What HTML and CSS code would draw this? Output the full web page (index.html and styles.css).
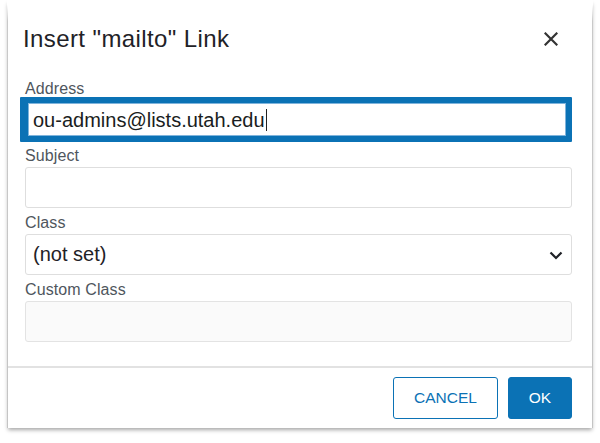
FILE: index.html
```html
<!DOCTYPE html>
<html lang="en">
<head>
<meta charset="utf-8">
<title>Insert mailto Link</title>
<link rel="stylesheet" href="styles.css">
</head>
<body>
<div class="dialog">
  <div class="header">
    <h1 class="title">Insert "mailto" Link</h1>
    <button class="close" aria-label="Close">
      <svg width="14" height="14" viewBox="0 0 14 14"><path d="M1.5 1.5 L12.5 12.5 M12.5 1.5 L1.5 12.5" stroke="#333" stroke-width="2.2" fill="none" stroke-linecap="square"/></svg>
    </button>
  </div>
  <div class="body">
    <div class="field">
      <div class="label">Address</div>
      <div class="input focused">ou-admins@lists.utah.edu<span class="caret"></span></div>
    </div>
    <div class="field field-subject">
      <div class="label">Subject</div>
      <div class="input"></div>
    </div>
    <div class="field">
      <div class="label">Class</div>
      <div class="input select">
        <span>(not set)</span>
        <svg class="chev" width="14" height="9" viewBox="0 0 14 9"><path d="M1.5 1.5 L7 7 L12.5 1.5" stroke="#1f2227" stroke-width="2.2" fill="none"/></svg>
      </div>
    </div>
    <div class="field">
      <div class="label">Custom Class</div>
      <div class="input disabled"></div>
    </div>
  </div>
  <div class="footer">
    <button class="btn btn-cancel">CANCEL</button>
    <button class="btn btn-ok">OK</button>
  </div>
</div>
</body>
</html>
```
FILE: styles.css
```css
* { box-sizing: border-box; }
html, body { margin: 0; padding: 0; background: #fff; }
body {
  font-family: "Liberation Sans", Arial, sans-serif;
  width: 600px;
  height: 443px;
  overflow: hidden;
}
.dialog {
  margin-left: 7px;
  width: 586px;
  background: #fff;
  border-style: solid;
  border-width: 0 1px;
  border-image: linear-gradient(to bottom, rgba(200,200,200,0) 6px, #c9c9c9 22px, #c4c4c4 100%) 1;
  box-shadow: 0 3px 4px -1px rgba(0,0,0,0.35);
}
.header {
  display: flex;
  align-items: center;
  justify-content: space-between;
  padding: 25px 34px 0 15px;
}
.title {
  margin: 0;
  font-size: 24px;
  line-height: 28px;
  font-weight: normal;
  color: #1f2227;
  letter-spacing: 0.4px;
}
.close {
  border: 0;
  background: none;
  padding: 0;
  width: 14px;
  height: 14px;
  display: flex;
}
.body {
  padding: 28px 20px 24px 17px;
}
.field { margin-top: 7px; }
.field:first-child { margin-top: 0; }
.field-subject { margin-top: 6px; }
.label {
  font-size: 16px;
  line-height: 16px;
  color: #4f565d;
  letter-spacing: 0.1px;
}
.input {
  margin-top: 3px;
  height: 41px;
  border: 1px solid #dedede;
  border-radius: 3px;
  background: #fff;
  font-size: 20px;
  line-height: 39px;
  color: #1f2227;
  padding: 0 8px 0 7px;
}
.input.focused {
  margin-top: 0;
  margin-left: -5px;
  height: 45px;
  border: 6px solid #0b72b5;
  border-left-width: 8px;
  border-radius: 1px;
  box-shadow: inset 0 0 0 1px #7fb4dc;
  line-height: 31px;
  padding: 2px 5px 0;
  color: #1a1d21;
}
.caret {
  display: inline-block;
  width: 1px;
  height: 22px;
  background: #222;
  vertical-align: -4px;
  margin-left: 1px;
}
.select {
  display: flex;
  align-items: center;
  justify-content: space-between;
  padding-right: 8px;
}
.chev { display: block; margin-top: 1px; }
.disabled {
  background: #fafafa;
  border-color: #e3e3e3;
}
.footer {
  border-top: 2px solid #e2e2e2;
  padding: 9px 20px 9px;
  display: flex;
  justify-content: flex-end;
  gap: 10px;
}
.btn {
  height: 42px;
  border-radius: 3px;
  font-family: "Liberation Sans", Arial, sans-serif;
  font-size: 15.5px;
  padding: 0;
  cursor: pointer;
}
.btn-cancel {
  width: 105px;
  background: #fff;
  color: #0b72b5;
  border: 1px solid #0b72b5;
}
.btn-ok {
  width: 64px;
  background: #0b72b5;
  color: #fff;
  border: 1px solid #0b72b5;
}
```
